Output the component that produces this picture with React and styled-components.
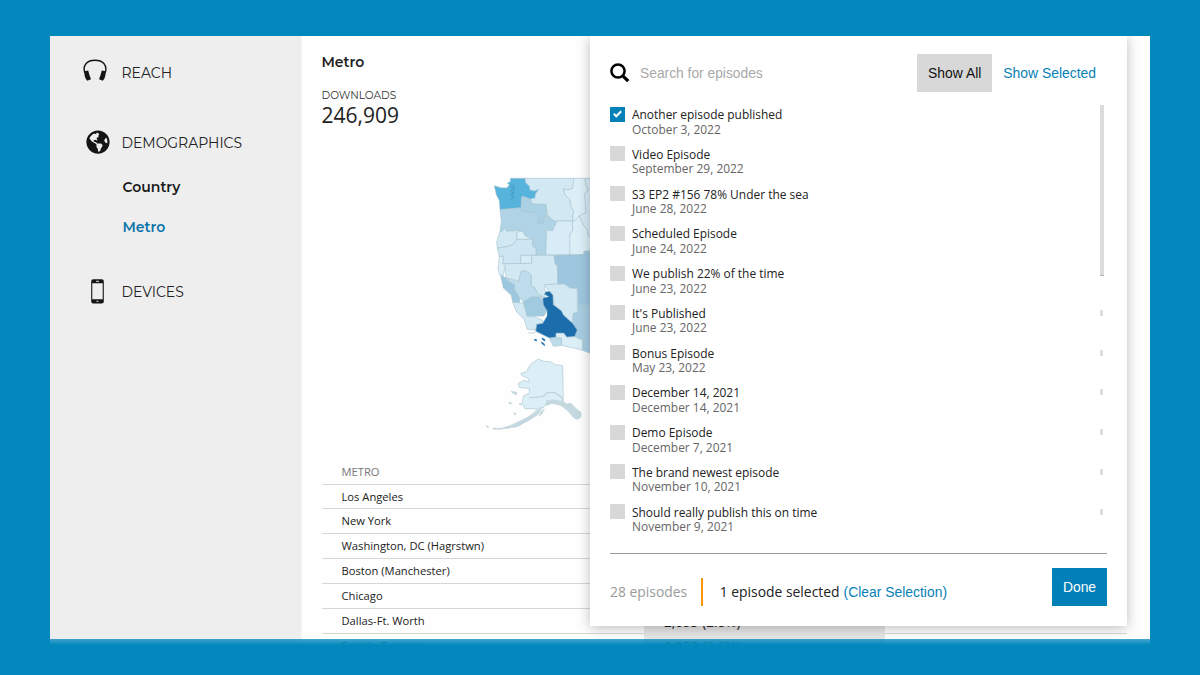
import React from "react";
import styled, { createGlobalStyle } from "styled-components";
import { FaGlobeAmericas } from "react-icons/fa";

const GlobalStyle = createGlobalStyle`
  * { box-sizing: border-box; }
  body { margin: 0; background: #0288bd; font-family: "Open Sans", sans-serif; color: #222; }
  button { border: 0; padding: 0; background: none; font: 13.9px "Liberation Sans", Arial, sans-serif; }
  ul { list-style: none; margin: 0; padding: 0; }
`;

const Page = styled.div`
  width: 1200px;
  height: 675px;
  padding: 36px 50px;
  background: #0288bd;
  overflow: hidden;
`;

const Window = styled.div`
  position: relative;
  display: flex;
  height: 609px;
  background: #fefefe;
  overflow: hidden;
`;

const Fade = styled.div`
  position: absolute;
  left: 0;
  right: 0;
  bottom: 0;
  height: 6px;
  background: linear-gradient(rgba(2, 136, 189, 0.74), #0288bd);
`;

const Sidebar = styled.nav`
  flex: none;
  width: 252px;
  padding: 21px 0 0 33px;
  background: #eeeeee;
  border-right: 1px solid #f5f5f5;
  font-family: Montserrat, Inter, sans-serif;
`;

const NavItem = styled.div`
  display: flex;
  align-items: center;
  height: 30px;
  margin-top: ${(p) => p.$gap || 0}px;
  font-size: 13.95px;
  line-height: 18px;
  color: #222;
`;

const NavLabel = styled.span`
  padding-top: 1px;
`;

const IconSlot = styled.span`
  flex: none;
  display: flex;
  justify-content: ${(p) => p.$align || "center"};
  width: 29px;
  margin: 0 9.500px ${(p) => p.$lift || 0}px 0;
  color: #151515;
`;

const SubItem = styled.div`
  margin: ${(p) => p.$gap}px 0 0 39.5px;
  height: 20px;
  line-height: 20px;
  font-size: 14px;
  font-weight: 600;
  color: ${(p) => (p.$active ? "#0c74a8" : "#1b1b1b")};
`;

const Main = styled.main`
  flex: 1;
  min-width: 0;
  padding: 16px 23px 0 19.5px;
  display: flex;
  flex-direction: column;
`;

const Title = styled.h1`
  margin: 0;
  font: 600 14px/20px Montserrat, Inter, sans-serif;
`;

const StatLabel = styled.div`
  margin-top: 16px;
  font: 10.5px/16px Montserrat, Inter, sans-serif;
  color: #333;
`;

const StatValue = styled.div`
  margin-top: -1px;
  font-size: 21px;
  line-height: 25px;
`;

const MapArea = styled.div`
  height: 270px;
  margin: 42px 0 0 158.5px;
`;

const Table = styled.div`
  display: flex;
  flex-direction: column;
  margin-top: 19.7px;
`;

const Row = styled.div`
  flex: none;
  display: grid;
  grid-template-columns: 322.5px 241px 1fr;
  height: 24.85px;
  border-bottom: 1px solid #d6d6d6;
  font-size: 11.2px;
  line-height: 23.500px;
  color: ${(p) => (p.$head ? "#777" : "#222")};
`;

const Cell = styled.span`
  padding-left: 20px;
  white-space: nowrap;
`;

const CountCell = styled(Cell)`
  background: #e6e6e6;
  font-size: 13.6px;
  line-height: 25px;
`;

const Panel = styled.section`
  position: absolute;
  top: 0;
  left: 540px;
  width: 537px;
  height: 590px;
  padding: 18px 20px 0;
  background: #fff;
  box-shadow: 0 2px 12px rgba(0, 0, 0, 0.26);
  display: flex;
  flex-direction: column;
`;

const PanelHeader = styled.header`
  display: flex;
  align-items: center;
  height: 38px;
`;

const SearchInput = styled.input`
  flex: 1;
  min-width: 0;
  margin-left: 10px;
  padding: 0;
  border: 0;
  outline: 0;
  font: 13.8px "Liberation Sans", Arial, sans-serif;
  &::placeholder { color: #a9a9a9; opacity: 1; }
`;

const FilterButton = styled.button`
  height: 38px;
  padding: 0 11px;
  white-space: nowrap;
  color: ${(p) => (p.$active ? "#111" : "#0681b6")};
  background: ${(p) => (p.$active ? "#d8d8d8" : "transparent")};
`;

const ListArea = styled.div`
  display: flex;
  justify-content: space-between;
  margin-top: 14px;
  height: 448px;
  border-bottom: 1px solid #999;
`;

const Episode = styled.li`
  display: flex;
  height: 39.75px;
`;

const Check = styled.span`
  flex: none;
  display: flex;
  align-items: center;
  justify-content: center;
  width: 15px;
  height: 15px;
  margin: 0.5px 7px 0 0;
  background: ${(p) => (p.$on ? "#0681b8" : "#d8d8d8")};
`;

const EpisodeText = styled.div`
  padding-top: 2px;
  font-size: 11.95px;
  line-height: 14.5px;
`;

const EpisodeDate = styled.div`
  color: #666;
`;

const Rail = styled.div`
  width: 4px;
  margin-right: 3px;
`;

const Thumb = styled.div`
  width: 4px;
  height: 171px;
  margin-top: -1px;
  background: #dcdcdc;
  border-bottom: 1px solid #b5b5b5;
`;

const Tick = styled.div`
  width: 3px;
  height: 6px;
  margin-top: 33.75px;
  background: #dedede;
`;

const PanelFooter = styled.footer`
  display: flex;
  align-items: flex-start;
  padding-top: 14px;
  font-size: 13.9px;
`;

const FooterText = styled.span`
  line-height: 18px;
  margin-top: 15px;
  color: ${(p) => (p.$muted ? "#9b9b9b" : "#222")};
  white-space: nowrap;
`;

const Divider = styled.span`
  width: 2px;
  height: 28px;
  margin: 10px 16.5px 0 14px;
  background: #ff9500;
`;

const LinkButton = styled.button`
  margin: 15px 0 0 4px;
  height: 18px;
  line-height: 18px;
  white-space: nowrap;
  color: #0681b6;
`;

const DoneButton = styled.button`
  width: 55px;
  height: 38px;
  margin-left: auto;
  background: #0280b8;
  color: #fff;
`;

const episodes = [
  ["Another episode published", "October 3, 2022"],
  ["Video Episode", "September 29, 2022"],
  ["S3 EP2 #156 78% Under the sea", "June 28, 2022"],
  ["Scheduled Episode", "June 24, 2022"],
  ["We publish 22% of the time", "June 23, 2022"],
  ["It's Published", "June 23, 2022"],
  ["Bonus Episode", "May 23, 2022"],
  ["December 14, 2021", "December 14, 2021"],
  ["Demo Episode", "December 7, 2021"],
  ["The brand newest episode", "November 10, 2021"],
  ["Should really publish this on time", "November 9, 2021"],
];

const metros = [
  ["Los Angeles"],
  ["New York"],
  ["Washington, DC (Hagrstwn)"],
  ["Boston (Manchester)"],
  ["Chicago"],
  ["Dallas-Ft. Worth", "2,053 (2.8%)"],
  ["Seattle-Tacoma", "1,953 (2.6%)"],
];

const Headphones = () => (
  <svg width="24" height="23" viewBox="0 0 24 23">
    <path d="M1.800 14C-.8 5.500 4.500 1.200 12 1.200S24.800 5.500 22.200 14" fill="none" stroke="currentColor" strokeWidth="1.400" />
    <path d="M1.200 12.200 5.200 11.500Q6.500 17 8 20.200L4.200 21.800Q1.500 19.500 1.200 12.200ZM22.800 12.200 18.800 11.500Q17.500 17 16 20.200L19.800 21.800Q22.500 19.500 22.800 12.200Z" fill="currentColor" />
  </svg>
);

const Phone = () => (
  <svg width="13" height="25" viewBox="0 0 13 25">
    <path fillRule="evenodd" fill="currentColor" d="M2.200.3h8.600a2 2 0 0 1 2 2v20.200a2 2 0 0 1-2 2H2.200a2 2 0 0 1-2-2V2.300a2 2 0 0 1 2-2ZM1.300 4.300v15.900h10.400V4.300Z" />
    <path d="M5 2.300h3M5.500 22.300h2" stroke="#ddd" strokeWidth="1" />
  </svg>
);

const SearchIcon = () => (
  <svg width="20" height="20" viewBox="0 0 20 20" fill="none" stroke="#000">
    <circle cx="8" cy="8" r="6.600" strokeWidth="2.500" />
    <path d="m12.800 12.800 5.400 5.400" strokeWidth="3.200" />
  </svg>
);

const regions = [
  ["#d2e9f4", "134,25 282,25 278,55 264,60 250,56 255,75 270,90 273,110 281,122 277,153 230,153 224,158 218,150 203,135 198,104 157,102 150,85"],
  ["#dceff7", "282,25 315,25 317,45 325,60 314,72 317,100 318,128 298,138 290,150 277,155 281,122 273,110 270,90 255,75 250,56 264,60 278,55"],
  ["#d7ecf6", "315,25 345,25 345,210 325,198 322,180 310,165 298,138 318,128 314,72 325,60 317,45"],
  ["#56b3dc", "43,47 62,53 80,54 88,45 82,39 91,35 91,25 135,25 137,39 148,48 150,60 164,63 176,58 166,72 165,84 150,87 126,79 124,90 124,113 60,119 58,92 49,74"],
  ["#abd1e4", "124,91 128,79 150,87 157,102 197,103 200,125 198,140 188,143 190,160 176,160 175,140 164,128 124,124"],
  ["#b0d4e6", "60,119 124,113 124,124 164,128 175,140 176,160 190,160 188,143 201,135 218,150 229,154 218,182 200,180 197,256 168,256 168,235 158,229 157,208 135,200 128,184 105,182 80,184 73,172 68,184 60,184 64,155"],
  ["#d2e9f4", "60,184 68,184 73,172 80,184 105,182 110,190 110,212 98,224 80,230 52,234 50,216"],
  ["#dceff7", "112,185 128,184 135,197 157,208 110,208"],
  ["#cde6f2", "52,234 80,230 98,224 111,208 157,208 158,229 168,235 168,256 122,256 122,281 68,282 70,258 58,260"],
  ["#d7ecf6", "200,180 218,182 232,153 277,153 278,182 269,195 275,218 270,254 197,255"],
  ["#dceff7", "269,195 279,180 277,158 298,138 310,165 322,180 325,198 345,210 345,242 312,244 310,254 270,254"],
  ["#dceff7", "58,260 70,258 68,282 75,290 70,316 60,316 54,298"],
  ["#d7ecf6", "122,256 155,256 155,280 122,281"],
  ["#d2e9f4", "75,281 155,280 155,256 222,256 226,283 232,286 234,342 205,344 192,352 197,365 193,373 196,383 172,371 165,354 154,348 154,318 145,307 132,302 122,306 120,334 78,324"],
  ["#9ec7df", "222,256 310,254 314,244 345,242 345,404 294,404 292,355 270,354 252,342 234,342 232,286 226,283"],
  ["#9cc7df", "62,315 78,324 85,334 104,344 104,360 120,384 118,403 98,396 94,376 70,354"],
  ["#bdddec", "78,324 115,336 122,306 132,302 145,307 154,318 154,348 165,354 172,371 190,382 165,381 130,396 120,384 104,360 104,344 85,334"],
  ["#d2e9f4", "98,396 130,399 142,440 165,440 187,450 193,463 170,465 167,480 142,478 133,449 110,426"],
  ["#a0cae0", "130,396 154,380 180,382 198,400 200,422 192,438 142,438"],
  ["#d2e9f4", "194,344 234,342 252,342 270,354 292,356 292,428 280,430 278,464 222,405 217,370 207,364 195,350"],
  ["#a8cde2", "294,404 345,404 345,555 305,540 308,510 280,502 292,480 278,464 280,430 294,428"],
  ["#1c6dac", "188,384 206,380 193,373 197,365 209,364 219,376 220,404 244,422 251,436 278,460 292,480 284,500 260,502 252,490 230,490 228,502 208,504 167,484 170,463 188,460 201,438 201,422 190,405"],
  ["#bddcea", "208,504 244,504 245,526 220,529"],
  ["#dceff7", "228,490 250,490 260,502 284,500 308,510 307,540 245,526 244,504 228,502"],
  ["#dceff7", "123,610 140,605 150,585 174,567 192,574 210,575 226,584 248,587 250,698 232,698 218,695 198,700 192,712 180,716 157,744 115,768 99,772 130,753 166,725 170,716 135,716 126,700 131,677 148,670 148,656 118,652 114,641 132,631 148,637 145,625 124,616"],
];

const UsMap = () => (
  <svg width="115" height="270" viewBox="0 0 345 810" strokeLinejoin="round">
    {regions.map(([fill, points], i) => (
      <polygon key={i} points={points} fill={fill} stroke="#a6c3cf" strokeOpacity=".75" strokeWidth="2.500" />
    ))}
    <path d="m97 40-6 10 9 5-9 10 10 3-10 8 9 4-6 10M99 42l3 14-4 12 3 12" fill="none" stroke="#3f95bf" strokeWidth="2" />
    <path d="m145 488 12 2 9-3" fill="none" stroke="#bdd3dc" strokeWidth="3" />
    <path d="m162 509 7-1v5ZM186 504l8 4 1 5-7-4ZM185 516l7 5 2 6-9-7Z" fill="#1c6dac" stroke="#1c6dac" strokeWidth="2" />
    <path d="m148 683 40-3 13-12 24 0 20 14 3 12" fill="none" stroke="#bfd5dc" strokeWidth="4" />
    <path d="m198 692 22-2 24 4 18 8 10-3 17 18 14 10v14l-10 7-11-4-20-23-20-15-26-6-18 7M131 748l20-10 16-9 14-18 4 2-10 20-26 16-30 16-34 10-28 2 34-10ZM193 718l-8 14-8 7 7-16ZM94 664l17 3-1 7-13-5ZM86 697l11 3-8 2ZM101 728l8 4-5 3ZM118 700l8 3-6 2ZM18 766l8 5-3 2ZM40 774l22 3-21 1Z" fill="#c4d9df" stroke="#bfd5dc" strokeWidth="2" />
  </svg>
);

const CheckMark = () => (
  <svg width="9" height="8" viewBox="0 0 9 8" fill="none" stroke="#fff" strokeWidth="2">
    <path d="m.8 3.800 2.500 2.500 4.900-5" />
  </svg>
);

export default function App() {
  return (
    <Page>
      <GlobalStyle />
      <Window>
        <Sidebar>
          <NavItem>
            <IconSlot $align="flex-start" $lift={4}><Headphones /></IconSlot>
            <NavLabel>REACH</NavLabel>
          </NavItem>
          <NavItem $gap={40}>
            <IconSlot><FaGlobeAmericas size={24} /></IconSlot>
            <NavLabel>DEMOGRAPHICS</NavLabel>
          </NavItem>
          <SubItem $gap={20}>Country</SubItem>
          <SubItem $gap={19.5} $active>Metro</SubItem>
          <NavItem $gap={39.5}>
            <IconSlot><Phone /></IconSlot>
            <NavLabel>DEVICES</NavLabel>
          </NavItem>
        </Sidebar>
        <Main>
          <Title>Metro</Title>
          <StatLabel>DOWNLOADS</StatLabel>
          <StatValue>246,909</StatValue>
          <MapArea><UsMap /></MapArea>
          <Table>
            <Row $head><Cell>METRO</Cell></Row>
            {metros.map(([name, count]) => (
              <Row key={name}>
                <Cell>{name}</Cell>
                <CountCell>{count}</CountCell>
              </Row>
            ))}
          </Table>
        </Main>
        <Panel>
          <PanelHeader>
            <SearchIcon />
            <SearchInput placeholder="Search for episodes" />
            <FilterButton $active>Show All</FilterButton>
            <FilterButton>Show Selected</FilterButton>
          </PanelHeader>
          <ListArea>
            <ul>
              {episodes.map(([name, date], i) => (
                <Episode key={name}>
                  <Check $on={i === 0}>{i === 0 && <CheckMark />}</Check>
                  <EpisodeText>
                    {name}
                    <EpisodeDate>{date}</EpisodeDate>
                  </EpisodeText>
                </Episode>
              ))}
            </ul>
            <Rail>
              <Thumb />
              {[0, 1, 2, 3, 4, 5].map((n) => <Tick key={n} />)}
            </Rail>
          </ListArea>
          <PanelFooter>
            <FooterText $muted>28 episodes</FooterText>
            <Divider />
            <FooterText>1 episode selected</FooterText>
            <LinkButton>(Clear Selection)</LinkButton>
            <DoneButton>Done</DoneButton>
          </PanelFooter>
        </Panel>
        <Fade />
      </Window>
    </Page>
  );
}
